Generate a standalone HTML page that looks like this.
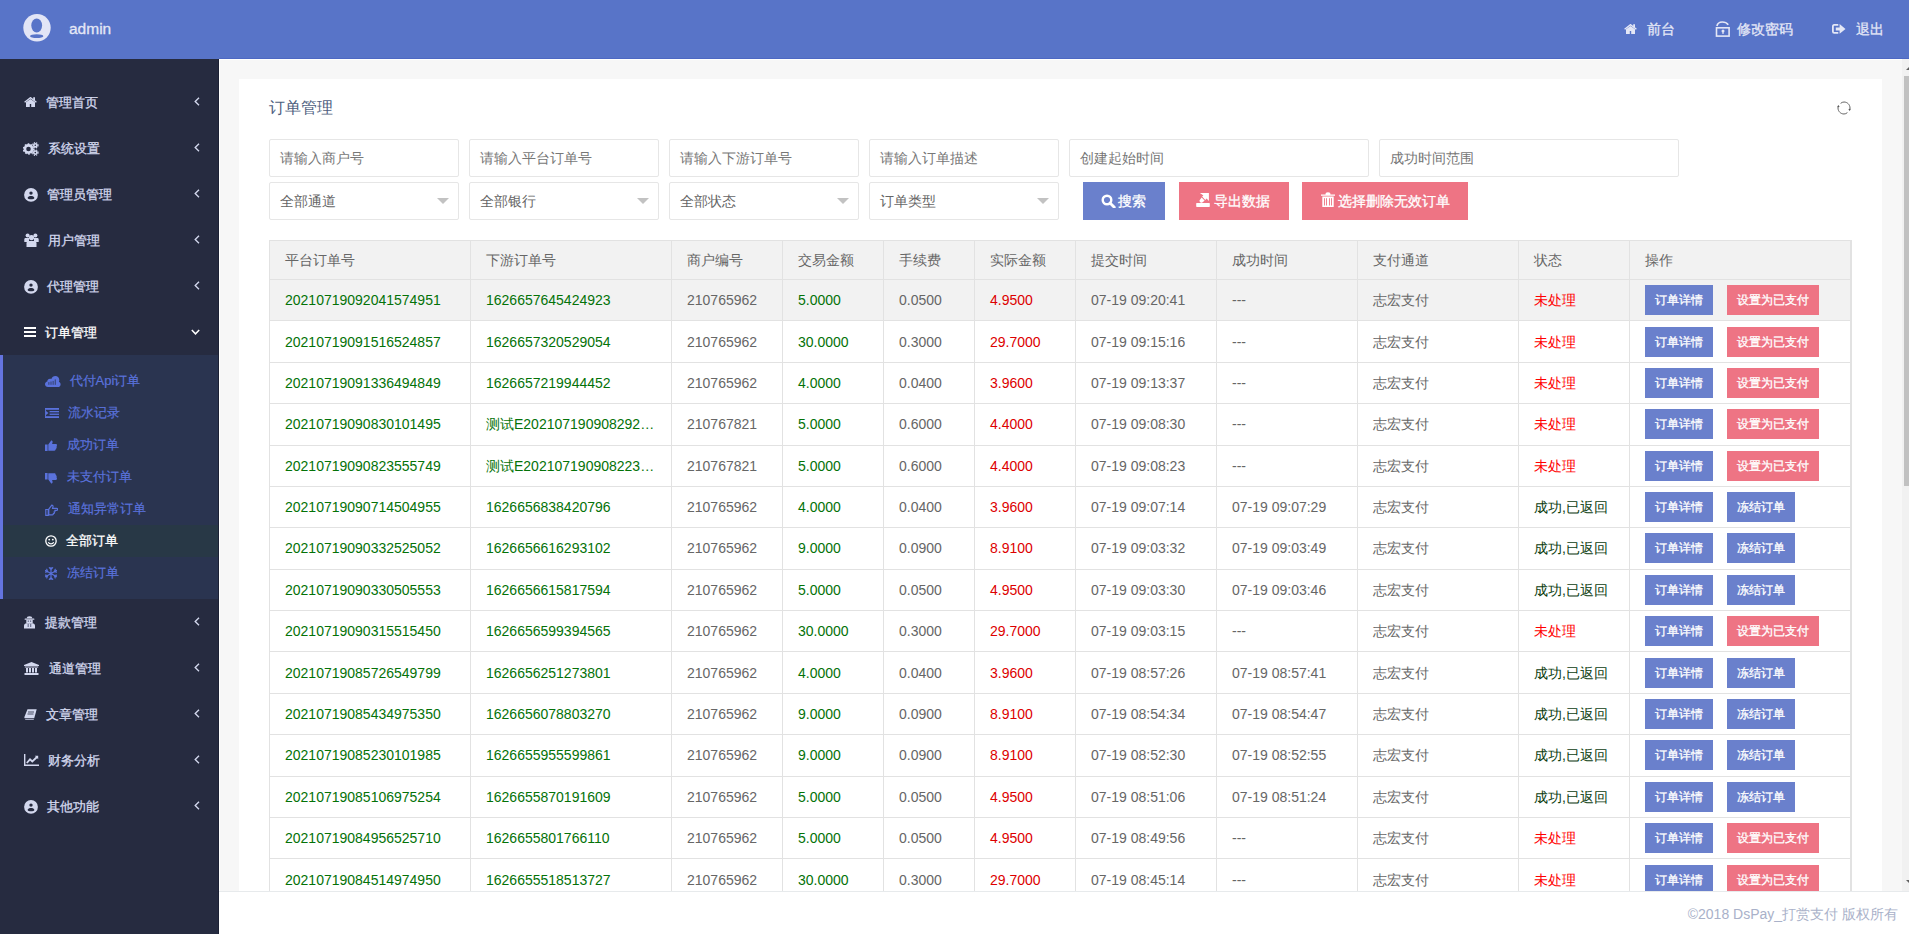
<!DOCTYPE html>
<html><head><meta charset="utf-8"><title>订单管理</title>
<style>
*{box-sizing:border-box;margin:0;padding:0}
html,body{width:1909px;height:934px;overflow:hidden;background:#fff;font-family:"Liberation Sans",sans-serif;}
.a{position:absolute}
svg{display:block}
#hdr{position:absolute;left:0;top:0;width:1909px;height:59px;background:#5874c8}
#hdrline{position:absolute;left:219px;top:58px;width:1690px;height:1px;background:#4d68c3}
.uname{position:absolute;left:69px;top:19px;font-size:15.5px;line-height:20px;color:#e4e7f6;-webkit-text-stroke:0.3px #e4e7f6}
.ht{position:absolute;top:19px;font-size:14px;line-height:20px;color:#e4e7f6;white-space:nowrap;-webkit-text-stroke:0.3px #e4e7f6}
#side{position:absolute;left:0;top:59px;width:219px;height:875px;background:#262b40;border-right:1px solid #1c2135}
.mi{position:absolute;left:0;width:218px;height:46px}
.mi .t{position:absolute;top:13.5px;font-size:13px;line-height:20px;color:#d3d8ee;white-space:nowrap;-webkit-text-stroke:0.3px #d3d8ee}
.mi .ic{position:absolute}
.chev{position:absolute;left:194px;top:18px}
#sub{position:absolute;left:0;top:296px;width:218px;height:244px;background:#2a3450;border-left:3px solid #6474e0}
.si{position:absolute;left:0;width:215px;height:32px}
.si .t{position:absolute;top:6px;font-size:13px;line-height:20px;color:#5a72dc;white-space:nowrap;-webkit-text-stroke:0.2px #5a72dc}
.si .ic{position:absolute}
.si.act{background:#283846}
.si.act .t{color:#fff;-webkit-text-stroke:0.3px #fff}
#cbg{position:absolute;left:219px;top:59px;width:1690px;height:832px;background:#f7f7f7;border-left:1px solid #fff;border-top:1px solid #fff}
#card{position:absolute;left:239px;top:79px;width:1643px;height:812px;background:#fff}
.title{position:absolute;left:269px;top:98px;font-size:16px;line-height:20px;color:#4d5e7e}
.inp{position:absolute;height:38px;border:1px solid #e6e6e6;border-radius:2px;background:#fff}
.inp span{position:absolute;left:10px;top:8px;font-size:14px;line-height:20px;color:#777;white-space:nowrap}
.inp.sel span{color:#666}
.inp .tri{position:absolute;right:9px;top:15px;width:0;height:0;border-left:6px solid transparent;border-right:6px solid transparent;border-top:6px solid #c2c2c2}
.btn{position:absolute;top:182px;height:38px;color:#fff;font-size:14px;line-height:38px;white-space:nowrap;-webkit-text-stroke:0.3px #fff}
.btn svg{position:absolute}
.btn span{position:absolute;top:0}
.bblue{background:#6a80cc}
.bpink{background:#ee7484}
.tbl{position:absolute;left:269px;top:240px;width:1583px;height:660px;border-left:1px solid #e2e2e2;border-top:1px solid #e2e2e2}
.tr{position:absolute;left:0;width:1582px;display:flex}
.th{top:0;height:39px;background:#f2f2f2}
.td{height:41.38px;background:#fff}
.td.hov{background:#f2f2f2}
.c{height:100%;border-right:1px solid #e2e2e2;border-bottom:1px solid #e2e2e2;padding-left:15px;font-size:14px;line-height:20px;color:#666;white-space:nowrap;overflow:hidden;display:flex;align-items:center}
.c.last{border-right:2px solid #e2e2e2}
.g{color:#047208}
.r{color:#dd0000}
.rr{color:#ff0000}
.dg{color:#0c3d10}
.bs{display:inline-block;height:30px;line-height:30px;padding:0 10px;font-size:12px;color:#fff;margin-right:14px;-webkit-text-stroke:0.3px #fff}
.b1{background:#6a80cc}
.b2{background:#ee7484}
#sbt{position:absolute;left:1902px;top:59px;width:7px;height:832px;background:#f1f1f1}
#sbth{position:absolute;left:1904px;top:76px;width:5px;height:410px;background:#c1c1c1}
#foot{position:absolute;left:219px;top:891px;width:1690px;height:43px;background:#fff;border-top:1px solid #e7eaec}
#foot span{position:absolute;right:11px;top:12px;font-size:14px;line-height:20px;color:#a9b1c9;white-space:nowrap}

</style></head><body>
<div id="hdr"></div>
<div id="hdrline"></div>
<!-- avatar -->
<svg class="a" style="left:23px;top:14px" width="28" height="28" viewBox="0 0 28 28">
<circle cx="14" cy="13.7" r="13.7" fill="#e2e5f6"/>
<ellipse cx="13.7" cy="11.5" rx="5.4" ry="7" fill="#5874c8"/>
<ellipse cx="13.7" cy="22.2" rx="6.6" ry="1.9" fill="#5874c8"/>
</svg>
<div class="uname">admin</div>
<!-- header right -->
<svg class="a" style="left:1624px;top:24px" width="13" height="10" viewBox="0 0 13 10"><path d="M0.6 5.3L6.5 0.7 12.4 5.3" fill="none" stroke="#e4e7f6" stroke-width="1.4"/><path d="M2 5.3L6.5 1.9 11 5.3V10H7.2V7.1H5.8V10H2z M9.2 0.3H11V3.8L9.2 2.4z" fill="#e4e7f6"/></svg>
<div class="ht" style="left:1647px">前台</div>
<svg class="a" style="left:1715px;top:21px" width="16" height="16" viewBox="0 0 16 16"><path d="M1.9 5C2.6 2 5 1 7.3 1 9.8 1 12 2.1 13.3 3.8" fill="none" stroke="#e4e7f6" stroke-width="1.6"/><rect x="1.5" y="6.8" width="12.6" height="8.3" fill="none" stroke="#e4e7f6" stroke-width="1.6"/><circle cx="8" cy="10" r="1.5" fill="#e4e7f6"/><rect x="7.4" y="10" width="1.2" height="3" fill="#e4e7f6"/></svg>
<div class="ht" style="left:1737px">修改密码</div>
<svg class="a" style="left:1832px;top:24px" width="14" height="10" viewBox="0 0 14 10"><path d="M6.3 0.9H2.2C1.3 0.9 0.9 1.5 0.9 2.3V7.5C0.9 8.3 1.3 8.9 2.2 8.9H6.3" fill="none" stroke="#e4e7f6" stroke-width="1.8"/><path d="M3.8 3.4H7.6V0.1L13.5 4.9 7.6 9.8V6.4H3.8z" fill="#e4e7f6"/></svg>
<div class="ht" style="left:1856px">退出</div>

<div id="side"></div>
<!-- top-level menu -->
<div class="mi" style="top:79px">
 <svg class="ic" style="left:23.5px;top:18px" width="13" height="10" viewBox="0 0 13 10"><path d="M0.6 5.3L6.5 0.7 12.4 5.3" fill="none" stroke="#d3d8ee" stroke-width="1.4"/><path d="M2 5.3L6.5 1.9 11 5.3V10H7.2V7.1H5.8V10H2z M9.2 0.3H11V3.8L9.2 2.4z" fill="#d3d8ee"/></svg>
 <div class="t" style="left:46px">管理首页</div>
 <svg class="chev" width="6" height="9" viewBox="0 0 6 9"><path d="M5 0.8L1.2 4.5 5 8.2" fill="none" stroke="#d3d8ee" stroke-width="1.35"/></svg>
</div>
<div class="mi" style="top:125px">
 <svg class="ic" style="left:23px;top:17px" width="16" height="14" viewBox="0 0 16 14"><circle cx="5.5" cy="7" r="3.6" fill="none" stroke="#d3d8ee" stroke-width="2.6"/><circle cx="5.5" cy="7" r="4.9" fill="none" stroke="#d3d8ee" stroke-width="1.6" stroke-dasharray="1.6 1.5"/><circle cx="12.3" cy="3.3" r="1.6" fill="none" stroke="#d3d8ee" stroke-width="1.6"/><circle cx="12.3" cy="3.3" r="2.7" fill="none" stroke="#d3d8ee" stroke-width="1.2" stroke-dasharray="1.2 1"/><circle cx="12.3" cy="10.6" r="1.6" fill="none" stroke="#d3d8ee" stroke-width="1.6"/><circle cx="12.3" cy="10.6" r="2.7" fill="none" stroke="#d3d8ee" stroke-width="1.2" stroke-dasharray="1.2 1"/></svg>
 <div class="t" style="left:48px">系统设置</div>
 <svg class="chev" width="6" height="9" viewBox="0 0 6 9"><path d="M5 0.8L1.2 4.5 5 8.2" fill="none" stroke="#d3d8ee" stroke-width="1.35"/></svg>
</div>
<div class="mi" style="top:171px">
 <svg class="ic" style="left:23.5px;top:16.5px" width="14" height="14" viewBox="0 0 14 14"><circle cx="7" cy="6.9" r="6.9" fill="#d3d8ee"/><circle cx="7" cy="5.1" r="1.7" fill="#262b40"/><path d="M3.6 9.9C4 8.6 5.3 8.1 7 8.1S10 8.6 10.4 9.9C10 10.9 8.8 11.3 7 11.3S4 10.9 3.6 9.9z" fill="#262b40"/></svg>
 <div class="t" style="left:47px">管理员管理</div>
 <svg class="chev" width="6" height="9" viewBox="0 0 6 9"><path d="M5 0.8L1.2 4.5 5 8.2" fill="none" stroke="#d3d8ee" stroke-width="1.35"/></svg>
</div>
<div class="mi" style="top:217px">
 <svg class="ic" style="left:23.5px;top:16px" width="15" height="14" viewBox="0 0 15 14"><circle cx="3.6" cy="2.6" r="2" fill="#d3d8ee"/><circle cx="11.4" cy="2.6" r="2" fill="#d3d8ee"/><path d="M0.3 9V6.5C0.3 5.4 1 5 2 5h3v4z M14.7 9V6.5C14.7 5.4 14 5 13 5h-3v4z" fill="#d3d8ee"/><circle cx="7.5" cy="4.6" r="2.6" fill="#d3d8ee"/><path d="M2.5 14V10.2c0-1.4 0.9-2.2 2.2-2.2h5.6c1.3 0 2.2 0.8 2.2 2.2V14z" fill="#d3d8ee"/></svg>
 <div class="t" style="left:48px">用户管理</div>
 <svg class="chev" width="6" height="9" viewBox="0 0 6 9"><path d="M5 0.8L1.2 4.5 5 8.2" fill="none" stroke="#d3d8ee" stroke-width="1.35"/></svg>
</div>
<div class="mi" style="top:263px">
 <svg class="ic" style="left:23.5px;top:16.5px" width="14" height="14" viewBox="0 0 14 14"><circle cx="7" cy="6.9" r="6.9" fill="#d3d8ee"/><circle cx="7" cy="5.1" r="1.7" fill="#262b40"/><path d="M3.6 9.9C4 8.6 5.3 8.1 7 8.1S10 8.6 10.4 9.9C10 10.9 8.8 11.3 7 11.3S4 10.9 3.6 9.9z" fill="#262b40"/></svg>
 <div class="t" style="left:46.5px">代理管理</div>
 <svg class="chev" width="6" height="9" viewBox="0 0 6 9"><path d="M5 0.8L1.2 4.5 5 8.2" fill="none" stroke="#d3d8ee" stroke-width="1.35"/></svg>
</div>
<div class="mi" style="top:309px">
 <svg class="ic" style="left:24px;top:18px" width="12" height="10" viewBox="0 0 12 10"><rect x="0" y="0" width="12" height="2" fill="#fff"/><rect x="0" y="4" width="12" height="2" fill="#fff"/><rect x="0" y="8" width="12" height="2" fill="#fff"/></svg>
 <div class="t" style="left:45px;color:#fff;-webkit-text-stroke:0.3px #fff">订单管理</div>
 <svg class="a" style="left:191px;top:20px" width="9" height="6" viewBox="0 0 9 6"><path d="M0.8 1L4.5 4.8 8.2 1" fill="none" stroke="#fff" stroke-width="1.5"/></svg>
</div>
<div id="sub" style="top:355px"></div>
<div class="si" style="top:365px;left:3px">
 <svg class="ic" style="left:41.5px;top:11px" width="16" height="11" viewBox="0 0 16 11"><path d="M3 11C1.3 11 0 9.8 0 8.2 0 6.8 1 5.7 2.3 5.5 2.3 3.8 3.5 2.8 5 2.8 5.5 2.8 5.9 2.9 6.3 3.1 7 1.2 8.5 0 10.3 0 12.5 0 14.2 1.7 14.3 3.9 14.3 4.6 14.2 5.2 13.9 5.8 15 6.3 15.6 7.3 15.6 8.4 15.6 9.9 14.5 11 13 11z" fill="#5a72dc"/><rect x="3.5" y="6.1" width="0.8" height="2.7" fill="#2a3450"/><rect x="5.6" y="5.5" width="0.8" height="3.3" fill="#2a3450"/><rect x="7.7" y="4.9" width="0.8" height="3.9" fill="#2a3450"/><rect x="9.8" y="3.4" width="0.8" height="5.4" fill="#2a3450"/></svg>
 <div class="t" style="left:66.5px">代付Api订单</div>
</div>
<div class="si" style="top:397px;left:3px">
 <svg class="ic" style="left:41.5px;top:11px" width="14" height="10" viewBox="0 0 14 10"><rect x="0" y="0" width="14" height="1.8" fill="#5a72dc"/><rect x="4.6" y="3" width="9.4" height="1.3" fill="#5a72dc"/><rect x="4.6" y="5.6" width="9.4" height="1.3" fill="#5a72dc"/><rect x="0" y="8.2" width="14" height="1.8" fill="#5a72dc"/><rect x="0" y="1.5" width="0.9" height="7" fill="#5a72dc"/><path d="M1 2.9L3.4 4.95 1 7z" fill="#5a72dc"/></svg>
 <div class="t" style="left:65px">流水记录</div>
</div>
<div class="si" style="top:429px;left:3px">
 <svg class="ic" style="left:41.5px;top:11px" width="12" height="11" viewBox="0 0 12 11"><rect x="0" y="4.5" width="2.6" height="6.5" fill="#5a72dc"/><path d="M3.3 10.8V4.6L6.2 0.4c1 0 1.6 0.6 1.4 1.8L7.1 4h3.6c0.9 0 1.3 0.6 1.3 1.2 0 0.5-0.2 0.8-0.5 1 0.3 0.3 0.4 0.6 0.3 1-0.1 0.4-0.3 0.6-0.6 0.8 0.2 0.3 0.2 0.7 0 1-0.2 0.3-0.4 0.5-0.7 0.6 0.1 0.6-0.3 1.2-1.1 1.2z" fill="#5a72dc"/></svg>
 <div class="t" style="left:64px">成功订单</div>
</div>
<div class="si" style="top:461px;left:3px">
 <svg class="ic" style="left:42px;top:11.5px" width="12" height="11" viewBox="0 0 12 11"><rect x="0" y="0" width="2.6" height="6.5" fill="#5a72dc"/><path d="M3.3 0.2V6.4L6.2 10.6c1 0 1.6-0.6 1.4-1.8L7.1 7h3.6c0.9 0 1.3-0.6 1.3-1.2 0-0.5-0.2-0.8-0.5-1 0.3-0.3 0.4-0.6 0.3-1-0.1-0.4-0.3-0.6-0.6-0.8 0.2-0.3 0.2-0.7 0-1-0.2-0.3-0.4-0.5-0.7-0.6 0.1-0.6-0.3-1.2-1.1-1.2z" fill="#5a72dc"/></svg>
 <div class="t" style="left:64px">未支付订单</div>
</div>
<div class="si" style="top:493px;left:3px">
 <svg class="ic" style="left:42px;top:11px" width="13" height="12" viewBox="0 0 13 12"><path d="M0.8 5.5h2.4v5.8H0.8z M3.8 5.2L6.8 1.2c0.8 0 1.4 0.5 1.2 1.5L7.6 4.3h4.1c0.6 0 0.9 0.5 0.9 1s-0.4 1-0.9 1H9.5c0.4 0.2 0.6 0.6 0.5 1-0.1 0.4-0.4 0.7-0.8 0.8 0.3 0.3 0.3 0.7 0.1 1-0.2 0.3-0.5 0.5-0.9 0.5 0.1 0.6-0.3 1.2-1 1.2H3.8z" fill="none" stroke="#5a72dc" stroke-width="1.2"/></svg>
 <div class="t" style="left:64.5px">通知异常订单</div>
</div>
<div class="si act" style="top:525px;left:3px">
 <svg class="ic" style="left:42px;top:9.5px" width="12" height="12" viewBox="0 0 12 12"><circle cx="6" cy="6" r="5.2" fill="none" stroke="#fff" stroke-width="1.3"/><circle cx="4.2" cy="4.6" r="0.9" fill="#fff"/><circle cx="7.8" cy="4.6" r="0.9" fill="#fff"/><path d="M3.3 7.2c0.6 1.2 1.5 1.7 2.7 1.7s2.1-0.5 2.7-1.7" fill="none" stroke="#fff" stroke-width="1.2"/></svg>
 <div class="t" style="left:63px">全部订单</div>
</div>
<div class="si" style="top:557px;left:3px">
 <svg class="ic" style="left:41.5px;top:10.2px" width="12" height="13.2" viewBox="0 0 12 13.2"><path d="M6.00 6.60L6.00 0.30M6.00 2.69L4.33 0.70M6.00 2.69L7.67 0.70M6.00 6.60L11.46 3.45M9.38 4.65L10.27 2.20M9.38 4.65L11.94 5.10M6.00 6.60L11.46 9.75M9.38 8.55L11.94 8.10M9.38 8.55L10.27 11.00M6.00 6.60L6.00 12.90M6.00 10.51L7.67 12.50M6.00 10.51L4.33 12.50M6.00 6.60L0.54 9.75M2.62 8.55L1.73 11.00M2.62 8.55L0.06 8.10M6.00 6.60L0.54 3.45M2.62 4.65L0.06 5.10M2.62 4.65L1.73 2.20" fill="none" stroke="#5a72dc" stroke-width="1.15" stroke-linecap="round"/></svg>
 <div class="t" style="left:64px">冻结订单</div>
</div>
<div class="mi" style="top:599px">
 <svg class="ic" style="left:24px;top:16.5px" width="11" height="13" viewBox="0 0 11 13"><path d="M2.8 2.2C2.8 0.9 3.5 0.2 5.5 0.2S8.2 0.9 8.2 2.2z" fill="#d3d8ee"/><rect x="0.6" y="2.4" width="9.8" height="1.4" rx="0.6" fill="#d3d8ee"/><path d="M2.3 3.8h6.4v3.6H2.3z" fill="#d3d8ee"/><circle cx="4.3" cy="5.1" r="0.7" fill="#3a4060"/><circle cx="6.6" cy="5.1" r="0.7" fill="#3a4060"/><path d="M0 12.5V9.8C0 8.2 1.1 7.2 2.6 7.2H8.4C9.9 7.2 11 8.2 11 9.8V12.5z" fill="#d3d8ee"/><rect x="3.7" y="7.8" width="0.9" height="3.2" fill="#4a5070"/><rect x="6.3" y="7.8" width="0.9" height="3.2" fill="#4a5070"/></svg>
 <div class="t" style="left:45px">提款管理</div>
 <svg class="chev" width="6" height="9" viewBox="0 0 6 9"><path d="M5 0.8L1.2 4.5 5 8.2" fill="none" stroke="#d3d8ee" stroke-width="1.35"/></svg>
</div>
<div class="mi" style="top:645px">
 <svg class="ic" style="left:24px;top:17px" width="15" height="13" viewBox="0 0 15 13"><path d="M7.5 0L15 3v1H0V3z" fill="#d3d8ee"/><rect x="0.8" y="4.5" width="13.4" height="1" fill="#d3d8ee"/><rect x="2" y="6" width="2" height="4.5" fill="#d3d8ee"/><rect x="5" y="6" width="2" height="4.5" fill="#d3d8ee"/><rect x="8" y="6" width="2" height="4.5" fill="#d3d8ee"/><rect x="11" y="6" width="2" height="4.5" fill="#d3d8ee"/><rect x="0.5" y="11" width="14" height="2" fill="#d3d8ee"/></svg>
 <div class="t" style="left:48.5px">通道管理</div>
 <svg class="chev" width="6" height="9" viewBox="0 0 6 9"><path d="M5 0.8L1.2 4.5 5 8.2" fill="none" stroke="#d3d8ee" stroke-width="1.35"/></svg>
</div>
<div class="mi" style="top:691px">
 <svg class="ic" style="left:24px;top:17.5px" width="13" height="11" viewBox="0 0 13 11"><path d="M3.5 0.3h9.2L10.2 9.3H1.2C0.4 9.3 0.2 8.6 0.4 8z" fill="#d3d8ee"/><path d="M1.2 10.8h8.6" stroke="#d3d8ee" stroke-width="1"/><path d="M4 3h6M3.5 5h6" stroke="#262b40" stroke-width="0.8"/></svg>
 <div class="t" style="left:46px">文章管理</div>
 <svg class="chev" width="6" height="9" viewBox="0 0 6 9"><path d="M5 0.8L1.2 4.5 5 8.2" fill="none" stroke="#d3d8ee" stroke-width="1.35"/></svg>
</div>
<div class="mi" style="top:737px">
 <svg class="ic" style="left:24px;top:17px" width="15" height="12" viewBox="0 0 15 12"><path d="M0.7 0v11.3H15" fill="none" stroke="#d3d8ee" stroke-width="1.4"/><path d="M2.8 9L6 5.3l2.3 2.2L13 3" fill="none" stroke="#d3d8ee" stroke-width="1.8"/><path d="M10.8 1.8h3.4v3.4z" fill="#d3d8ee"/></svg>
 <div class="t" style="left:48px">财务分析</div>
 <svg class="chev" width="6" height="9" viewBox="0 0 6 9"><path d="M5 0.8L1.2 4.5 5 8.2" fill="none" stroke="#d3d8ee" stroke-width="1.35"/></svg>
</div>
<div class="mi" style="top:783px">
 <svg class="ic" style="left:23.5px;top:16.5px" width="14" height="14" viewBox="0 0 14 14"><circle cx="7" cy="6.9" r="6.9" fill="#d3d8ee"/><circle cx="7" cy="5.1" r="1.7" fill="#262b40"/><path d="M3.6 9.9C4 8.6 5.3 8.1 7 8.1S10 8.6 10.4 9.9C10 10.9 8.8 11.3 7 11.3S4 10.9 3.6 9.9z" fill="#262b40"/></svg>
 <div class="t" style="left:46.5px">其他功能</div>
 <svg class="chev" width="6" height="9" viewBox="0 0 6 9"><path d="M5 0.8L1.2 4.5 5 8.2" fill="none" stroke="#d3d8ee" stroke-width="1.35"/></svg>
</div>

<!-- content -->
<div id="cbg"></div>
<div id="card"></div>
<div class="title">订单管理</div>
<svg class="a" style="left:1837px;top:101px" width="14" height="14" viewBox="0 0 14 14"><path d="M3.6 2.4C4.6 1.5 5.8 1 7 1c3.3 0 6 2.7 6 6 0 0.6-0.1 1.2-0.3 1.8" fill="none" stroke="#666" stroke-width="1"/><path d="M10.4 11.6C9.4 12.5 8.2 13 7 13c-3.3 0-6-2.7-6-6 0-0.6 0.1-1.2 0.3-1.8" fill="none" stroke="#666" stroke-width="1"/><path d="M11.3 8.2l1.5 1.8 1-2.2z M2.7 5.8L1.2 4l-1 2.2z" fill="#555"/></svg>
<div class="inp" style="left:269px;top:139px;width:190px"><span>请输入商户号</span></div>
<div class="inp" style="left:469px;top:139px;width:190px"><span>请输入平台订单号</span></div>
<div class="inp" style="left:669px;top:139px;width:190px"><span>请输入下游订单号</span></div>
<div class="inp" style="left:869px;top:139px;width:190px"><span>请输入订单描述</span></div>
<div class="inp" style="left:1069px;top:139px;width:300px"><span>创建起始时间</span></div>
<div class="inp" style="left:1379px;top:139px;width:300px"><span>成功时间范围</span></div>
<div class="inp sel" style="left:269px;top:182px;width:190px"><span>全部通道</span><i class="tri"></i></div>
<div class="inp sel" style="left:469px;top:182px;width:190px"><span>全部银行</span><i class="tri"></i></div>
<div class="inp sel" style="left:669px;top:182px;width:190px"><span>全部状态</span><i class="tri"></i></div>
<div class="inp sel" style="left:869px;top:182px;width:190px"><span>订单类型</span><i class="tri"></i></div>
<div class="btn bblue" style="left:1083px;width:82px">
 <svg style="left:17.5px;top:12px" width="15" height="14" viewBox="0 0 15 14"><circle cx="6" cy="6" r="4.3" fill="none" stroke="#fff" stroke-width="2.4"/><path d="M9 9l4.3 4.3" stroke="#fff" stroke-width="2.8" stroke-linecap="round"/></svg>
 <span style="left:35px">搜索</span></div>
<div class="btn bpink" style="left:1179px;width:110px">
 <svg style="left:17px;top:11px" width="14" height="14" viewBox="0 0 14 14"><path d="M3.9 0.1H12.9V8L10.6 5.6 9.3 6.9 6.1 3.6 7.4 2.4z" fill="#fff"/><path d="M5.6 4.6L8.6 7.6 6.7 9.3C6 9.9 5 9.9 4.3 9.2L3.9 8.8C3.3 8.2 3.3 7.3 4 6.7z" fill="#fff"/><rect x="0.2" y="9.9" width="13.6" height="4" rx="0.6" fill="#fff"/></svg>
 <span style="left:35px">导出数据</span></div>
<div class="btn bpink" style="left:1302px;width:166px">
 <svg style="left:19px;top:10px" width="14" height="15" viewBox="0 0 14 15"><path d="M0 2.6h14v1.2H0z M4.5 2.6C4.5 1 5.2 0.3 7 0.3S9.5 1 9.5 2.6" fill="#fff"/><path d="M1.3 4.5h11.4V15H1.3z" fill="#fff"/><rect x="3" y="6.2" width="0.9" height="7.3" fill="#ee7484"/><rect x="5" y="6.2" width="0.9" height="7.3" fill="#ee7484"/><rect x="8" y="6.2" width="0.9" height="7.3" fill="#ee7484"/><rect x="10" y="6.2" width="0.9" height="7.3" fill="#ee7484"/></svg>
 <span style="left:36px">选择删除无效订单</span></div>
<div class="tbl"><div class="tr th"><div class="c " style="width:201px">平台订单号</div><div class="c " style="width:201px">下游订单号</div><div class="c " style="width:111px">商户编号</div><div class="c " style="width:101px">交易金额</div><div class="c " style="width:91px">手续费</div><div class="c " style="width:101px">实际金额</div><div class="c " style="width:141px">提交时间</div><div class="c " style="width:141px">成功时间</div><div class="c " style="width:161px">支付通道</div><div class="c " style="width:111px">状态</div><div class="c last " style="width:222px">操作</div></div><div class="tr td hov" style="top:39.000px"><div class="c g" style="width:201px">20210719092041574951</div><div class="c g" style="width:201px">1626657645424923</div><div class="c " style="width:111px">210765962</div><div class="c g" style="width:101px">5.0000</div><div class="c " style="width:91px">0.0500</div><div class="c r" style="width:101px">4.9500</div><div class="c " style="width:141px">07-19 09:20:41</div><div class="c " style="width:141px">---</div><div class="c " style="width:161px">志宏支付</div><div class="c rr" style="width:111px">未处理</div><div class="c last ops" style="width:222px"><span class="bs b1">订单详情</span><span class="bs b2">设置为已支付</span></div></div><div class="tr td" style="top:80.380px"><div class="c g" style="width:201px">20210719091516524857</div><div class="c g" style="width:201px">1626657320529054</div><div class="c " style="width:111px">210765962</div><div class="c g" style="width:101px">30.0000</div><div class="c " style="width:91px">0.3000</div><div class="c r" style="width:101px">29.7000</div><div class="c " style="width:141px">07-19 09:15:16</div><div class="c " style="width:141px">---</div><div class="c " style="width:161px">志宏支付</div><div class="c rr" style="width:111px">未处理</div><div class="c last ops" style="width:222px"><span class="bs b1">订单详情</span><span class="bs b2">设置为已支付</span></div></div><div class="tr td" style="top:121.760px"><div class="c g" style="width:201px">20210719091336494849</div><div class="c g" style="width:201px">1626657219944452</div><div class="c " style="width:111px">210765962</div><div class="c g" style="width:101px">4.0000</div><div class="c " style="width:91px">0.0400</div><div class="c r" style="width:101px">3.9600</div><div class="c " style="width:141px">07-19 09:13:37</div><div class="c " style="width:141px">---</div><div class="c " style="width:161px">志宏支付</div><div class="c rr" style="width:111px">未处理</div><div class="c last ops" style="width:222px"><span class="bs b1">订单详情</span><span class="bs b2">设置为已支付</span></div></div><div class="tr td" style="top:163.140px"><div class="c g" style="width:201px">20210719090830101495</div><div class="c g" style="width:201px">测试E202107190908292…</div><div class="c " style="width:111px">210767821</div><div class="c g" style="width:101px">5.0000</div><div class="c " style="width:91px">0.6000</div><div class="c r" style="width:101px">4.4000</div><div class="c " style="width:141px">07-19 09:08:30</div><div class="c " style="width:141px">---</div><div class="c " style="width:161px">志宏支付</div><div class="c rr" style="width:111px">未处理</div><div class="c last ops" style="width:222px"><span class="bs b1">订单详情</span><span class="bs b2">设置为已支付</span></div></div><div class="tr td" style="top:204.520px"><div class="c g" style="width:201px">20210719090823555749</div><div class="c g" style="width:201px">测试E202107190908223…</div><div class="c " style="width:111px">210767821</div><div class="c g" style="width:101px">5.0000</div><div class="c " style="width:91px">0.6000</div><div class="c r" style="width:101px">4.4000</div><div class="c " style="width:141px">07-19 09:08:23</div><div class="c " style="width:141px">---</div><div class="c " style="width:161px">志宏支付</div><div class="c rr" style="width:111px">未处理</div><div class="c last ops" style="width:222px"><span class="bs b1">订单详情</span><span class="bs b2">设置为已支付</span></div></div><div class="tr td" style="top:245.900px"><div class="c g" style="width:201px">20210719090714504955</div><div class="c g" style="width:201px">1626656838420796</div><div class="c " style="width:111px">210765962</div><div class="c g" style="width:101px">4.0000</div><div class="c " style="width:91px">0.0400</div><div class="c r" style="width:101px">3.9600</div><div class="c " style="width:141px">07-19 09:07:14</div><div class="c " style="width:141px">07-19 09:07:29</div><div class="c " style="width:161px">志宏支付</div><div class="c dg" style="width:111px">成功,已返回</div><div class="c last ops" style="width:222px"><span class="bs b1">订单详情</span><span class="bs b1 b3">冻结订单</span></div></div><div class="tr td" style="top:287.280px"><div class="c g" style="width:201px">20210719090332525052</div><div class="c g" style="width:201px">1626656616293102</div><div class="c " style="width:111px">210765962</div><div class="c g" style="width:101px">9.0000</div><div class="c " style="width:91px">0.0900</div><div class="c r" style="width:101px">8.9100</div><div class="c " style="width:141px">07-19 09:03:32</div><div class="c " style="width:141px">07-19 09:03:49</div><div class="c " style="width:161px">志宏支付</div><div class="c dg" style="width:111px">成功,已返回</div><div class="c last ops" style="width:222px"><span class="bs b1">订单详情</span><span class="bs b1 b3">冻结订单</span></div></div><div class="tr td" style="top:328.660px"><div class="c g" style="width:201px">20210719090330505553</div><div class="c g" style="width:201px">1626656615817594</div><div class="c " style="width:111px">210765962</div><div class="c g" style="width:101px">5.0000</div><div class="c " style="width:91px">0.0500</div><div class="c r" style="width:101px">4.9500</div><div class="c " style="width:141px">07-19 09:03:30</div><div class="c " style="width:141px">07-19 09:03:46</div><div class="c " style="width:161px">志宏支付</div><div class="c dg" style="width:111px">成功,已返回</div><div class="c last ops" style="width:222px"><span class="bs b1">订单详情</span><span class="bs b1 b3">冻结订单</span></div></div><div class="tr td" style="top:370.040px"><div class="c g" style="width:201px">20210719090315515450</div><div class="c g" style="width:201px">1626656599394565</div><div class="c " style="width:111px">210765962</div><div class="c g" style="width:101px">30.0000</div><div class="c " style="width:91px">0.3000</div><div class="c r" style="width:101px">29.7000</div><div class="c " style="width:141px">07-19 09:03:15</div><div class="c " style="width:141px">---</div><div class="c " style="width:161px">志宏支付</div><div class="c rr" style="width:111px">未处理</div><div class="c last ops" style="width:222px"><span class="bs b1">订单详情</span><span class="bs b2">设置为已支付</span></div></div><div class="tr td" style="top:411.420px"><div class="c g" style="width:201px">20210719085726549799</div><div class="c g" style="width:201px">1626656251273801</div><div class="c " style="width:111px">210765962</div><div class="c g" style="width:101px">4.0000</div><div class="c " style="width:91px">0.0400</div><div class="c r" style="width:101px">3.9600</div><div class="c " style="width:141px">07-19 08:57:26</div><div class="c " style="width:141px">07-19 08:57:41</div><div class="c " style="width:161px">志宏支付</div><div class="c dg" style="width:111px">成功,已返回</div><div class="c last ops" style="width:222px"><span class="bs b1">订单详情</span><span class="bs b1 b3">冻结订单</span></div></div><div class="tr td" style="top:452.800px"><div class="c g" style="width:201px">20210719085434975350</div><div class="c g" style="width:201px">1626656078803270</div><div class="c " style="width:111px">210765962</div><div class="c g" style="width:101px">9.0000</div><div class="c " style="width:91px">0.0900</div><div class="c r" style="width:101px">8.9100</div><div class="c " style="width:141px">07-19 08:54:34</div><div class="c " style="width:141px">07-19 08:54:47</div><div class="c " style="width:161px">志宏支付</div><div class="c dg" style="width:111px">成功,已返回</div><div class="c last ops" style="width:222px"><span class="bs b1">订单详情</span><span class="bs b1 b3">冻结订单</span></div></div><div class="tr td" style="top:494.180px"><div class="c g" style="width:201px">20210719085230101985</div><div class="c g" style="width:201px">1626655955599861</div><div class="c " style="width:111px">210765962</div><div class="c g" style="width:101px">9.0000</div><div class="c " style="width:91px">0.0900</div><div class="c r" style="width:101px">8.9100</div><div class="c " style="width:141px">07-19 08:52:30</div><div class="c " style="width:141px">07-19 08:52:55</div><div class="c " style="width:161px">志宏支付</div><div class="c dg" style="width:111px">成功,已返回</div><div class="c last ops" style="width:222px"><span class="bs b1">订单详情</span><span class="bs b1 b3">冻结订单</span></div></div><div class="tr td" style="top:535.560px"><div class="c g" style="width:201px">20210719085106975254</div><div class="c g" style="width:201px">1626655870191609</div><div class="c " style="width:111px">210765962</div><div class="c g" style="width:101px">5.0000</div><div class="c " style="width:91px">0.0500</div><div class="c r" style="width:101px">4.9500</div><div class="c " style="width:141px">07-19 08:51:06</div><div class="c " style="width:141px">07-19 08:51:24</div><div class="c " style="width:161px">志宏支付</div><div class="c dg" style="width:111px">成功,已返回</div><div class="c last ops" style="width:222px"><span class="bs b1">订单详情</span><span class="bs b1 b3">冻结订单</span></div></div><div class="tr td" style="top:576.940px"><div class="c g" style="width:201px">20210719084956525710</div><div class="c g" style="width:201px">1626655801766110</div><div class="c " style="width:111px">210765962</div><div class="c g" style="width:101px">5.0000</div><div class="c " style="width:91px">0.0500</div><div class="c r" style="width:101px">4.9500</div><div class="c " style="width:141px">07-19 08:49:56</div><div class="c " style="width:141px">---</div><div class="c " style="width:161px">志宏支付</div><div class="c rr" style="width:111px">未处理</div><div class="c last ops" style="width:222px"><span class="bs b1">订单详情</span><span class="bs b2">设置为已支付</span></div></div><div class="tr td" style="top:618.320px"><div class="c g" style="width:201px">20210719084514974950</div><div class="c g" style="width:201px">1626655518513727</div><div class="c " style="width:111px">210765962</div><div class="c g" style="width:101px">30.0000</div><div class="c " style="width:91px">0.3000</div><div class="c r" style="width:101px">29.7000</div><div class="c " style="width:141px">07-19 08:45:14</div><div class="c " style="width:141px">---</div><div class="c " style="width:161px">志宏支付</div><div class="c rr" style="width:111px">未处理</div><div class="c last ops" style="width:222px"><span class="bs b1">订单详情</span><span class="bs b2">设置为已支付</span></div></div></div>
<div id="sbt"></div>
<div id="sbth"></div>
<svg class="a" style="left:1906px;top:67px" width="3" height="3" viewBox="0 0 3 3"><path d="M0 3L3 0V3z" fill="#606060"/></svg>
<svg class="a" style="left:1906px;top:879.5px" width="3" height="3" viewBox="0 0 3 3"><path d="M0 0H3V3z" fill="#606060"/></svg>
<div id="foot"><span>©2018 DsPay_打赏支付 版权所有</span></div>

</body></html>
